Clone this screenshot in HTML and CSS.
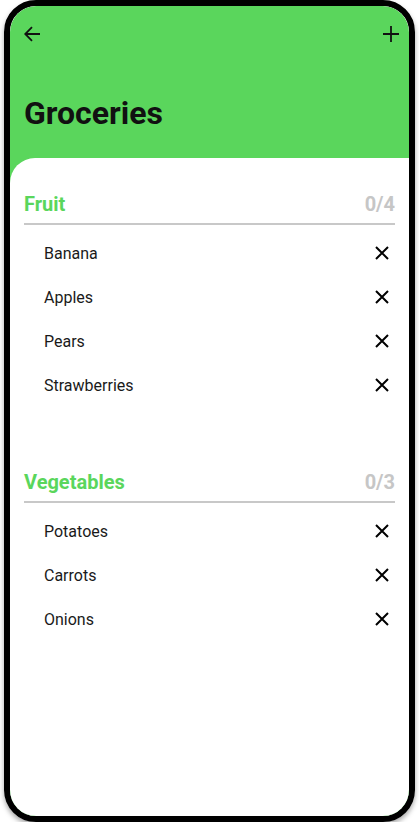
FILE: index.html
```html
<!DOCTYPE html>
<html lang="en">
<head>
<meta charset="utf-8">
<title>Groceries</title>
<link rel="stylesheet" href="styles.css">
</head>
<body>
<div class="phone">
  <div class="screen">
    <header class="appbar">
      <div class="toolbar">
        <svg class="icon" width="16" height="16" viewBox="0 0 16 16" aria-label="Back">
          <path d="M16 8H1.6M8 1.2L1.2 8L8 14.8" fill="none" stroke="#111" stroke-width="1.8"/>
        </svg>
        <svg class="icon" width="16" height="16" viewBox="0 0 16 16" aria-label="Add">
          <path d="M8 0V16M0 8H16" fill="none" stroke="#111" stroke-width="1.8"/>
        </svg>
      </div>
      <h1 class="title">Groceries</h1>
    </header>
    <main class="card">
      <section class="group">
        <div class="group-head">
          <span class="group-name">Fruit</span>
          <span class="group-count">0/4</span>
        </div>
        <ul class="items">
          <li class="item"><span>Banana</span><svg class="x" width="14" height="14" viewBox="0 0 14 14"><path d="M1 1L13 13M13 1L1 13" stroke="#000" stroke-width="2"/></svg></li>
          <li class="item"><span>Apples</span><svg class="x" width="14" height="14" viewBox="0 0 14 14"><path d="M1 1L13 13M13 1L1 13" stroke="#000" stroke-width="2"/></svg></li>
          <li class="item"><span>Pears</span><svg class="x" width="14" height="14" viewBox="0 0 14 14"><path d="M1 1L13 13M13 1L1 13" stroke="#000" stroke-width="2"/></svg></li>
          <li class="item"><span>Strawberries</span><svg class="x" width="14" height="14" viewBox="0 0 14 14"><path d="M1 1L13 13M13 1L1 13" stroke="#000" stroke-width="2"/></svg></li>
        </ul>
      </section>
      <section class="group">
        <div class="group-head">
          <span class="group-name">Vegetables</span>
          <span class="group-count">0/3</span>
        </div>
        <ul class="items">
          <li class="item"><span>Potatoes</span><svg class="x" width="14" height="14" viewBox="0 0 14 14"><path d="M1 1L13 13M13 1L1 13" stroke="#000" stroke-width="2"/></svg></li>
          <li class="item"><span>Carrots</span><svg class="x" width="14" height="14" viewBox="0 0 14 14"><path d="M1 1L13 13M13 1L1 13" stroke="#000" stroke-width="2"/></svg></li>
          <li class="item"><span>Onions</span><svg class="x" width="14" height="14" viewBox="0 0 14 14"><path d="M1 1L13 13M13 1L1 13" stroke="#000" stroke-width="2"/></svg></li>
        </ul>
      </section>
    </main>
  </div>
</div>
</body>
</html>
```

FILE: styles.css
```css
* { box-sizing: border-box; }
html, body {
  margin: 0;
  padding: 0;
  background: #fff;
  font-family: Roboto, "Liberation Sans", Arial, sans-serif;
}
.phone {
  margin: 0 4px;
  width: 411px;
  height: 822px;
  border: 6px solid #000;
  border-radius: 32px;
  box-shadow: 0 3px 5px rgba(0, 0, 0, 0.35);
  overflow: hidden;
}
.screen {
  height: 100%;
  border-radius: 26px;
  overflow: hidden;
  background: #5ad65c;
  display: flex;
  flex-direction: column;
}
.appbar {
  height: 152px;
  flex: none;
  display: flex;
  flex-direction: column;
}
.toolbar {
  display: flex;
  justify-content: space-between;
  padding: 20px 10px 0 14px;
}
.icon { display: block; }
.title {
  margin: 52px 0 0 14px;
  font-size: 32px;
  line-height: 38px;
  font-weight: 700;
  color: #111;
}
.card {
  flex: 1;
  background: #fff;
  border-top-left-radius: 25px;
  padding: 34px 14px 0;
  display: flex;
  flex-direction: column;
  gap: 62px;
}
.group-head {
  display: flex;
  justify-content: space-between;
  align-items: center;
  padding-bottom: 7px;
  border-bottom: 2px solid #c8c8c8;
  font-size: 20px;
  line-height: 24px;
  font-weight: 700;
}
.group-name { color: #5ad65c; }
.group-count { color: #c6c6c6; }
.items {
  list-style: none;
  margin: 7px 0 0;
  padding: 0;
}
.item {
  height: 44px;
  display: flex;
  align-items: center;
  justify-content: space-between;
  padding: 0 6px 0 20px;
  font-size: 16px;
  line-height: 44px;
  color: #1a1a1a;
}
.x { display: block; margin-top: -2px; }
```
